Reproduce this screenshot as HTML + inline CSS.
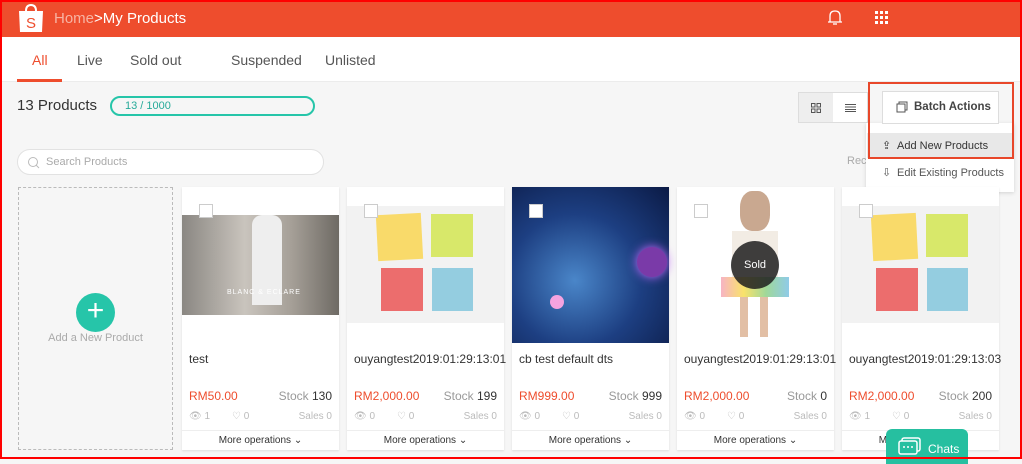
<!DOCTYPE html>
<html><head><meta charset="utf-8"><style>
*{box-sizing:border-box;margin:0;padding:0}
body{width:1022px;height:459px;overflow:hidden;background:#f6f6f6;font-family:"Liberation Sans",sans-serif;position:relative}
.frame{position:absolute;inset:0;border:2px solid #f00;pointer-events:none;z-index:50}
.hdr{position:absolute;left:0;top:0;width:1022px;height:37px;background:#ee4d2d;color:#fff}
.tabs{position:absolute;top:37px;left:0;width:1022px;height:45px;background:#fff;border-bottom:1px solid #ececec}
.tabs span{position:absolute;top:15px;font-size:14px;color:#555}
.a{position:absolute}
.card{position:absolute;top:187px;width:157px;height:263px;background:#fff;box-shadow:0 1px 2px rgba(0,0,0,.1)}
.card .t{position:absolute;left:7px;top:165px;font-size:12px;color:#333;white-space:nowrap}
.card .p{position:absolute;left:7px;top:202px;font-size:12px;color:#ee4d2d}
.card .s{position:absolute;right:7px;top:202px;font-size:12px;color:#999}
.card .s b{font-weight:normal;color:#333}
.card .st{position:absolute;left:7px;right:7px;top:224px;font-size:10px;color:#bbb}
.card .mo{position:absolute;left:0;right:0;top:243px;height:20px;border-top:1px solid #eee;text-align:center;font-size:10px;color:#333;line-height:20px}
.cb{position:absolute;left:17px;top:17px;width:14px;height:14px;background:#fff;border:1px solid #ccc}
.note{position:absolute}
</style></head><body>
<div class="hdr">
 <svg class="a" style="left:18px;top:3px" width="26" height="30" viewBox="0 0 26 30"><path d="M8 8 Q8 2 13 2 Q18 2 18 8" fill="none" stroke="#fff" stroke-width="2"/><path d="M1 8 H25 L24 29 H2 Z" fill="#fff"/><text x="13" y="25" font-size="15" fill="#ee4d2d" text-anchor="middle" font-family="Liberation Sans">S</text></svg>
 <div class="a" style="left:54px;top:10px;font-size:15px"><span style="color:#f7b3a2">Home</span>&gt;My Products</div>
 <svg class="a" style="left:827px;top:9px" width="16" height="18" viewBox="0 0 16 18"><path d="M3 13 V7 Q3 2 8 2 Q13 2 13 7 V13 H15 H1 Z" fill="none" stroke="#fff" stroke-width="1.3"/><path d="M6 15 H10" stroke="#fff" stroke-width="1.3"/></svg>
 <svg class="a" style="left:875px;top:11px" width="14" height="14"><g fill="#fff"><rect x="0" y="0" width="3" height="3"/><rect x="5" y="0" width="3" height="3"/><rect x="10" y="0" width="3" height="3"/><rect x="0" y="5" width="3" height="3"/><rect x="5" y="5" width="3" height="3"/><rect x="10" y="5" width="3" height="3"/><rect x="0" y="10" width="3" height="3"/><rect x="5" y="10" width="3" height="3"/><rect x="10" y="10" width="3" height="3"/></g></svg>
</div>
<div class="tabs">
 <span style="left:32px;color:#ee4d2d">All</span><span style="left:77px">Live</span><span style="left:130px">Sold out</span><span style="left:231px">Suspended</span><span style="left:325px">Unlisted</span>
 <div class="a" style="left:17px;top:42px;width:45px;height:3px;background:#ee4d2d"></div>
</div>
<div class="a" style="left:17px;top:97px;font-size:15px;color:#333">13 Products</div>
<div class="a" style="left:110px;top:96px;width:205px;height:20px;border:2px solid #26c5a9;border-radius:10px;font-size:11px;color:#26aa99;padding-left:13px;line-height:16px">13 / 1000</div>
<div class="a" style="left:17px;top:149px;width:307px;height:26px;border:1px solid #e2e2e2;border-radius:13px;background:#fff;font-size:11px;color:#aaa;padding-left:28px;line-height:24px">Search Products</div>
<svg class="a" style="left:27px;top:156px" width="13" height="13"><circle cx="6" cy="6" r="4.5" fill="none" stroke="#bbb"/><path d="M9 9 L12 12" stroke="#bbb"/></svg>
<div class="a" style="left:798px;top:92px;width:70px;height:31px;border:1px solid #ddd;background:#fff"></div>
<div class="a" style="left:799px;top:93px;width:34px;height:29px;background:#eee"></div>
<svg class="a" style="left:811px;top:103px" width="10" height="10"><g fill="none" stroke="#555"><rect x=".5" y=".5" width="3.5" height="3.5"/><rect x="6" y=".5" width="3.5" height="3.5"/><rect x=".5" y="6" width="3.5" height="3.5"/><rect x="6" y="6" width="3.5" height="3.5"/></g></svg>
<svg class="a" style="left:845px;top:104px" width="11" height="8"><path d="M0 .5H11M0 3H11M0 5.5H11M0 7.5H11" stroke="#555"/></svg>
<div class="a" style="left:847px;top:155px;font-size:11px;color:#aaa">Rec</div>
<div class="a" style="left:866px;top:123px;width:148px;height:69px;background:#fff;box-shadow:0 1px 4px rgba(0,0,0,.15)"></div>
<div class="a" style="left:867px;top:133px;width:146px;height:25px;background:#e8e8e8"></div>
<div class="a" style="left:897px;top:140px;font-size:11px;color:#333">Add New Products</div>
<div class="a" style="left:882px;top:139px;font-size:11px;color:#333">⇪</div>
<div class="a" style="left:897px;top:167px;font-size:11px;color:#555">Edit Existing Products</div>
<div class="a" style="left:882px;top:166px;font-size:11px;color:#555">⇩</div>
<div class="a" style="left:882px;top:91px;width:117px;height:33px;border:1px solid #ddd;background:#fff;font-size:11.5px;color:#444;font-weight:bold;line-height:31px;padding-left:31px;white-space:nowrap">Batch Actions</div>
<svg class="a" style="left:896px;top:101px" width="12" height="12"><rect x="1" y="3" width="8" height="8" fill="none" stroke="#555"/><path d="M3 3V1H11V9H9" fill="none" stroke="#555"/></svg>
<div class="a" style="left:868px;top:82px;width:146px;height:77px;border:2px solid #e8472a;z-index:20"></div>

<div class="a" style="left:18px;top:187px;width:155px;height:263px;border:1px dashed #bbb;background:#f6f6f6"></div>
<div class="a" style="left:76px;top:293px;width:39px;height:39px;border-radius:50%;background:#26c5a9;color:#fff;font-size:30px;line-height:36px;text-align:center">+</div>
<div class="a" style="left:18px;top:332px;width:155px;text-align:center;font-size:11px;color:#aaa">Add a New Product</div>

<div class="card" style="left:182px">
 <div class="a" style="left:0;top:28px;width:157px;height:100px;background:linear-gradient(90deg,#8a8782,#c9c4bd 40%,#a59f97 70%,#6e6a64)"></div>
 <div class="a" style="left:70px;top:28px;width:30px;height:90px;background:#eee;border-radius:10px 10px 0 0"></div>
 <div class="a" style="left:45px;top:102px;font-size:7px;color:#fff;letter-spacing:1px">BLANC &amp; ECLARE</div>
 <div class="cb"></div>
 <div class="t">test</div><div class="p">RM50.00</div><div class="s">Stock <b>130</b></div>
 <div class="st">👁 1<span style="position:absolute;left:43px">♡ 0</span><span style="position:absolute;right:0">Sales 0</span></div>
 <div class="mo">More operations ⌄</div>
</div>
<div class="card" style="left:347px">
 <div class="a" style="left:0;top:19px;width:157px;height:117px;background:#f2f2f2"></div>
 <div class="note" style="left:30px;top:27px;width:45px;height:46px;background:#f9da6a;transform:rotate(-3deg)"></div>
 <div class="note" style="left:84px;top:27px;width:42px;height:43px;background:#d8e86a"></div>
 <div class="note" style="left:34px;top:81px;width:42px;height:43px;background:#ec6d6d"></div>
 <div class="note" style="left:85px;top:81px;width:41px;height:43px;background:#94cde0"></div>
 <div class="cb"></div>
 <div class="t">ouyangtest2019:01:29:13:01</div><div class="p">RM2,000.00</div><div class="s">Stock <b>199</b></div>
 <div class="st">👁 0<span style="position:absolute;left:43px">♡ 0</span><span style="position:absolute;right:0">Sales 0</span></div>
 <div class="mo">More operations ⌄</div>
</div>
<div class="card" style="left:512px">
 <div class="a" style="left:0;top:0;width:157px;height:156px;background:radial-gradient(circle at 40% 60%,#4a86c9,#1d3f82 50%,#0b1a45)"></div>
 <div class="a" style="left:125px;top:60px;width:30px;height:30px;border-radius:50%;background:#7a3aa8;box-shadow:0 0 10px #c46aff"></div>
 <div class="a" style="left:38px;top:108px;width:14px;height:14px;border-radius:50%;background:#f5a3e0"></div>
 <div class="cb"></div>
 <div class="t">cb test default dts</div><div class="p">RM999.00</div><div class="s">Stock <b>999</b></div>
 <div class="st">👁 0<span style="position:absolute;left:43px">♡ 0</span><span style="position:absolute;right:0">Sales 0</span></div>
 <div class="mo">More operations ⌄</div>
</div>
<div class="card" style="left:677px">
 <div class="a" style="left:63px;top:4px;width:30px;height:40px;border-radius:40%;background:#c9a890"></div>
 <div class="a" style="left:55px;top:44px;width:46px;height:50px;background:#f2ece4"></div>
 <div class="a" style="left:44px;top:90px;width:68px;height:20px;background:linear-gradient(90deg,#f7b4c4,#f9e26a,#9fd89a,#8fcbe8)"></div>
 <div class="a" style="left:63px;top:110px;width:8px;height:40px;background:#e2bfa5"></div>
 <div class="a" style="left:83px;top:110px;width:8px;height:40px;background:#e2bfa5"></div>
 <div class="a" style="left:54px;top:54px;width:48px;height:48px;border-radius:50%;background:rgba(30,30,30,.85);color:#fff;font-size:11px;text-align:center;line-height:48px">Sold</div>
 <div class="cb"></div>
 <div class="t">ouyangtest2019:01:29:13:01</div><div class="p">RM2,000.00</div><div class="s">Stock <b>0</b></div>
 <div class="st">👁 0<span style="position:absolute;left:43px">♡ 0</span><span style="position:absolute;right:0">Sales 0</span></div>
 <div class="mo">More operations ⌄</div>
</div>
<div class="card" style="left:842px">
 <div class="a" style="left:0;top:19px;width:157px;height:117px;background:#f2f2f2"></div>
 <div class="note" style="left:30px;top:27px;width:45px;height:46px;background:#f9da6a;transform:rotate(-3deg)"></div>
 <div class="note" style="left:84px;top:27px;width:42px;height:43px;background:#d8e86a"></div>
 <div class="note" style="left:34px;top:81px;width:42px;height:43px;background:#ec6d6d"></div>
 <div class="note" style="left:85px;top:81px;width:41px;height:43px;background:#94cde0"></div>
 <div class="cb"></div>
 <div class="t">ouyangtest2019:01:29:13:03</div><div class="p">RM2,000.00</div><div class="s">Stock <b>200</b></div>
 <div class="st">👁 1<span style="position:absolute;left:43px">♡ 0</span><span style="position:absolute;right:0">Sales 0</span></div>
 <div class="mo">More operations ⌄</div>
</div>
<div class="a" style="left:886px;top:429px;width:82px;height:35px;background:#26bfa0;border-radius:6px 6px 0 0;z-index:30;color:#fff;font-size:12px;padding:13px 0 0 42px">Chats</div>
<svg class="a" style="left:898px;top:437px;z-index:31" width="24" height="20"><rect x="4" y="1" width="18" height="13" rx="2" fill="none" stroke="#fff" stroke-width="1.5"/><rect x="1" y="4" width="18" height="13" rx="2" fill="#26bfa0" stroke="#fff" stroke-width="1.5"/><circle cx="6" cy="10" r="1" fill="#fff"/><circle cx="10" cy="10" r="1" fill="#fff"/><circle cx="14" cy="10" r="1" fill="#fff"/></svg>
<div class="frame"></div>
</body></html>
